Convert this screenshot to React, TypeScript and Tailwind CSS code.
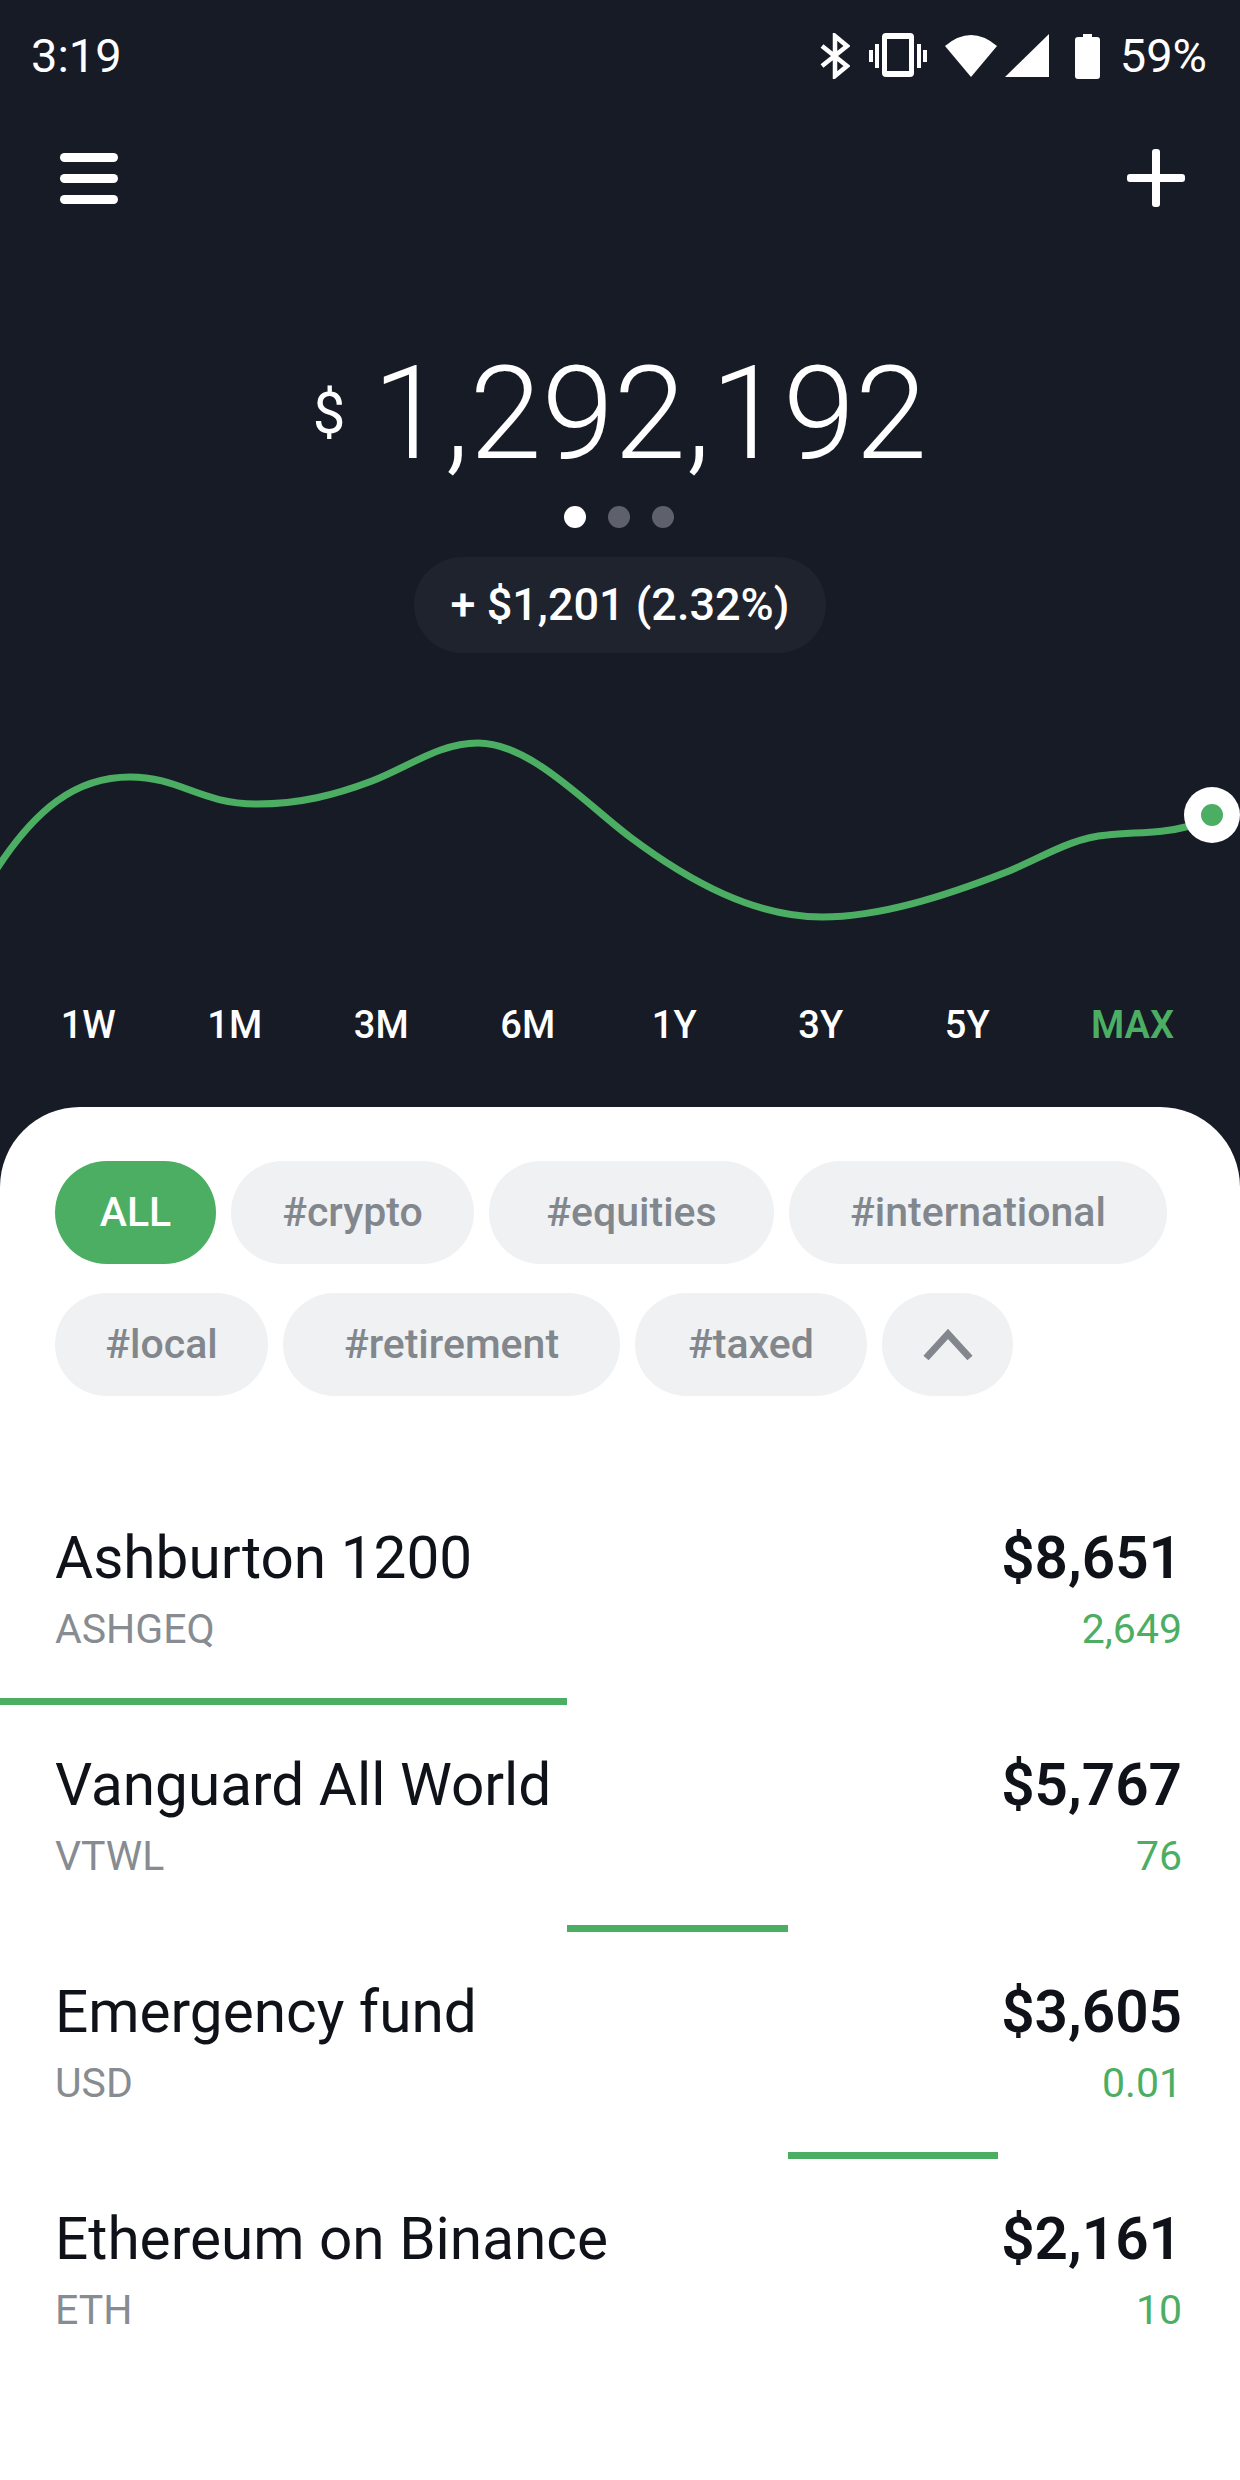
import React from "react";

const ranges = ["1W", "1M", "3M", "6M", "1Y", "3Y", "5Y"];
const row1 = [
  { label: "#crypto", w: "w-[243px]" },
  { label: "#equities", w: "w-[285px]" },
  { label: "#international", w: "w-[378px]" },
];
const row2 = [
  { label: "#local", w: "w-[213px]" },
  { label: "#retirement", w: "w-[337px]" },
  { label: "#taxed", w: "w-[232px]" },
];
const holdings = [
  { name: "Ashburton 1200", code: "ASHGEQ", value: "$8,651", qty: "2,649", bar: "ml-0 w-[567px]" },
  { name: "Vanguard All World", code: "VTWL", value: "$5,767", qty: "76", bar: "ml-[567px] w-[221px]" },
  { name: "Emergency fund", code: "USD", value: "$3,605", qty: "0.01", bar: "ml-[788px] w-[210px]" },
  { name: "Ethereum on Binance", code: "ETH", value: "$2,161", qty: "10", bar: "" },
];

function Chip({ label, w }: { label: string; w: string }) {
  return (
    <div className={`h-[103px] ${w} rounded-full bg-[#f0f1f3] text-[#81878c] text-[41px] font-medium flex items-center justify-center`}>
      {label}
    </div>
  );
}

function StatusIcons() {
  return (
    <div className="flex items-center">
      <svg width="30" height="46" viewBox="0 0 30 46" fill="none" stroke="white" strokeWidth="4.5">
        <path d="M2 13 L27 33 L15 43 V3 L27 13 L2 33" strokeLinejoin="miter" />
      </svg>
      <svg width="58" height="46" viewBox="0 0 58 46" fill="white" className="ml-[19px]">
        <path fillRule="evenodd" d="M17 0 H41 Q45 0 45 4 V40 Q45 44 41 44 H17 Q13 44 13 40 V4 Q13 0 17 0 Z M18 6 V38 H40 V6 Z" />
        <rect x="0" y="17" width="4" height="12" />
        <rect x="6" y="11" width="4" height="24" />
        <rect x="48" y="11" width="4" height="24" />
        <rect x="54" y="17" width="4" height="12" />
      </svg>
      <svg width="52" height="42" viewBox="0 0 52 42" fill="white" className="ml-[18px]">
        <path d="M0 11 Q26 -11 52 11 L26 42 Z" />
      </svg>
      <svg width="44" height="43" viewBox="0 0 44 43" fill="white" className="ml-[8px]">
        <path d="M44 0 V43 H0 Z" />
      </svg>
      <svg width="25" height="46" viewBox="0 0 25 46" fill="white" className="ml-[26px]">
        <path d="M8 1 H17 V4 H22 Q25 4 25 7 V43 Q25 46 22 46 H3 Q0 46 0 43 V7 Q0 4 3 4 H8 Z" />
      </svg>
      <span className="ml-[20px] text-[47px] leading-none">59%</span>
    </div>
  );
}

export default function App() {
  return (
    <div className="w-[1240px] h-[2480px] bg-[#171b26] text-white flex flex-col font-['Roboto',sans-serif]">
      {/* status bar */}
      <div className="h-[110px] pl-[31px] pr-[33px] pt-[32px] flex justify-between items-start">
        <span className="text-[47px] leading-[47px]">3:19</span>
        <StatusIcons />
      </div>

      {/* app bar */}
      <div className="h-[76px] pl-[60px] pr-[55px] mt-[30px] flex justify-between items-center">
        <div className="w-[58px] flex flex-col gap-[12px]">
          <div className="h-[9px] rounded-full bg-white" />
          <div className="h-[9px] rounded-full bg-white" />
          <div className="h-[9px] rounded-full bg-white" />
        </div>
        <svg width="58" height="58" viewBox="0 0 58 58" fill="white">
          <rect x="0" y="25" width="58" height="8" rx="3" />
          <rect x="25" y="0" width="8" height="58" rx="3" />
        </svg>
      </div>

      {/* balance */}
      <div className="mt-[118px] h-[160px] flex justify-center items-center">
        <span className="text-[58px] leading-none mr-[27px] mb-[2px]">$</span>
        <span className="text-[130px] leading-none font-light">1,292,192</span>
      </div>
      <div className="mt-[12px] flex justify-center gap-[22px] pr-[2px]">
        <div className="w-[22px] h-[22px] rounded-full bg-white" />
        <div className="w-[22px] h-[22px] rounded-full bg-[#5e616b]" />
        <div className="w-[22px] h-[22px] rounded-full bg-[#5e616b]" />
      </div>
      <div className="mt-[29px] flex justify-center">
        <div className="w-[412px] h-[96px] rounded-full bg-[#1f232e] flex items-center justify-center text-[45px] font-medium">
          + $1,201 (2.32%)
        </div>
      </div>

      {/* chart */}
      <svg width="1240" height="230" viewBox="0 700 1240 230" fill="none" className="block mt-[47px]">
        <path
          d="M-4 870 C 35 810, 75 777, 130 777 C 180 777, 200 804, 257 804 C 300 804, 335 795, 372 781 C 410 766, 440 743, 478 743 C 530 743, 585 803, 630 837 C 690 882, 755 917, 822 917 C 880 917, 945 896, 1004 873 C 1040 859, 1070 838, 1107 835 C 1135 832, 1160 834, 1190 826"
          stroke="#4cae63"
          strokeWidth="7"
          strokeLinecap="round"
        />
        <circle cx="1212" cy="815" r="28" fill="white" />
        <circle cx="1212" cy="815" r="11" fill="#4cae63" />
      </svg>

      {/* ranges */}
      <div className="mt-[75px] h-[40px] pl-[15px] flex items-center text-[38px] font-medium">
        {ranges.map((r) => (
          <span key={r} className="w-[146.5px] text-center">{r}</span>
        ))}
        <span className="ml-[27px] w-[130px] text-center text-[#4cae63] font-semibold">MAX</span>
      </div>

      {/* sheet */}
      <div className="mt-[62px] flex-1 bg-white rounded-t-[80px] pt-[54px] text-[#0f1218]">
        <div className="pl-[55px] flex flex-col gap-[29px]">
          <div className="flex gap-[15px]">
            <div className="h-[103px] w-[161px] rounded-full bg-[#4cae63] text-white text-[41px] font-medium flex items-center justify-center">
              ALL
            </div>
            {row1.map((c) => (
              <Chip key={c.label} label={c.label} w={c.w} />
            ))}
          </div>
          <div className="flex gap-[15px]">
            {row2.map((c) => (
              <Chip key={c.label} label={c.label} w={c.w} />
            ))}
            <div className="h-[103px] w-[131px] rounded-full bg-[#f0f1f3] flex items-center justify-center">
              <svg width="50" height="32" viewBox="0 0 50 32" fill="none" stroke="#81878c" strokeWidth="7">
                <path d="M3 29 L25 5 L47 29" />
              </svg>
            </div>
          </div>
        </div>

        <div className="mt-[82px] flex flex-col">
          {holdings.map((h) => (
            <div key={h.name}>
              <div className="h-[220px] pl-[55px] pr-[58px] pt-[48px] flex justify-between">
                <div>
                  <div className="text-[58.5px] leading-[64px]">{h.name}</div>
                  <div className="mt-[16px] text-[41px] leading-[46px] text-[#868c92]">{h.code}</div>
                </div>
                <div className="text-right">
                  <div className="text-[58.5px] leading-[64px] font-semibold">{h.value}</div>
                  <div className="mt-[16px] text-[41px] leading-[46px] text-[#4cae63]">{h.qty}</div>
                </div>
              </div>
              {h.bar && <div className={`h-[7px] bg-[#4cae63] ${h.bar}`} />}
            </div>
          ))}
        </div>
      </div>
    </div>
  );
}
